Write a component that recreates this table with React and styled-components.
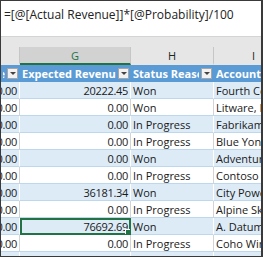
import React from "react";
import styled, { createGlobalStyle } from "styled-components";

const GlobalStyle = createGlobalStyle`
  html, body {
    margin: 0;
    padding: 0;
    background: #fff;
  }
  body {
    font-family: "Open Sans", "Noto Sans", sans-serif;
  }
`;

const COLS = "19px 111px 83px 80px";

const Frame = styled.div`
  width: 263px;
  height: 257px;
  box-sizing: border-box;
  border: 1px solid #3a3a3a;
  border-right-width: 2px;
  overflow: hidden;
  background: #fff;
  display: flex;
  flex-direction: column;
`;

const FormulaBar = styled.div`
  height: 36px;
  flex-shrink: 0;
  border-bottom: 1px solid #d4d4d4;
  padding: 5px 0 0 3px;
  box-sizing: border-box;
  font-size: 12px;
  color: #222;
  white-space: nowrap;
`;

const ColumnHeads = styled.div`
  flex-shrink: 0;
  background: #e6e6e6;
  padding-top: 10px;
  display: grid;
  grid-template-columns: ${COLS};
`;

const ColHead = styled.div`
  height: 15px;
  box-sizing: content-box;
  border-right: 1px solid #c6c6c6;
  border-bottom: 2px solid ${(p) => (p.$active ? "#217346" : "#e6e6e6")};
  background: ${(p) => (p.$active ? "#d2d2d2" : "#e6e6e6")};
  color: ${(p) => (p.$active ? "#217346" : "#222")};
  font-size: 11px;
  display: flex;
  align-items: center;
  justify-content: center;
  padding-top: 1px;
`;

const Row = styled.div`
  display: grid;
  grid-template-columns: ${COLS};
  height: 17px;
  flex-shrink: 0;
  background: ${(p) => (p.$head ? "#5b9bd5" : p.$band ? "#ddebf7" : "#fff")};
  font-size: 11px;
`;

const Cell = styled.div`
  position: relative;
  box-sizing: border-box;
  overflow: hidden;
  white-space: nowrap;
  display: flex;
  align-items: center;
  justify-content: ${(p) => (p.$num ? "flex-end" : "flex-start")};
  padding: ${(p) => (p.$num ? "0 2px 0 0" : "0 0 0 2px")};
  border-right: 1px solid ${(p) => (p.$band ? "#ffffff" : "#d4d4d4")};
  border-bottom: 1px solid #bdd7ee;
  color: #1a1a1a;
  letter-spacing: ${(p) => (p.$num ? "-0.3px" : "0")};
  outline: ${(p) => (p.$selected ? "2px solid #217346" : "none")};
  outline-offset: -2px;
`;

const HeadCell = styled.div`
  box-sizing: border-box;
  overflow: hidden;
  white-space: nowrap;
  display: flex;
  align-items: center;
  gap: 2px;
  padding: 0 2px;
  color: #fff;
  font-weight: bold;
`;

const HeadText = styled.span`
  flex: 1;
  overflow: hidden;
  display: flex;
  justify-content: ${(p) => (p.$end ? "flex-end" : "flex-start")};
`;

const Dropdown = styled.span`
  width: 11px;
  height: 11px;
  flex-shrink: 0;
  box-sizing: border-box;
  background: #f2f2f2;
  border: 1px solid #a6a6a6;
  display: flex;
  align-items: center;
  justify-content: center;

  &::after {
    content: "";
    border-left: 3px solid transparent;
    border-right: 3px solid transparent;
    border-top: 3px solid #444;
  }
`;

const FillHandle = styled.span`
  position: absolute;
  right: -1px;
  bottom: -1px;
  width: 4px;
  height: 4px;
  background: #217346;
  border: 1px solid #fff;
`;

const rows = [
  ["20222.45", "Won", "Fourth Coffee"],
  ["0.00", "Won", "Litware, Inc."],
  ["0.00", "In Progress", "Fabrikam, Inc."],
  ["0.00", "In Progress", "Blue Yonder Airlines"],
  ["0.00", "Won", "Adventure Works"],
  ["0.00", "In Progress", "Contoso Pharmaceuticals"],
  ["36181.34", "Won", "City Power & Light"],
  ["0.00", "In Progress", "Alpine Ski House"],
  ["76692.69", "Won", "A. Datum Corporation"],
  ["0.00", "In Progress", "Coho Winery"],
  ["0.00", "Won", "Fourth Coffee"],
];

const App = () => {
  return (
    <>
      <GlobalStyle />
      <Frame>
        <FormulaBar>=[@[Actual Revenue]]*[@Probability]/100</FormulaBar>

        <ColumnHeads>
          <ColHead />
          <ColHead $active>G</ColHead>
          <ColHead>H</ColHead>
          <ColHead>I</ColHead>
        </ColumnHeads>

        <Row $head>
          <HeadCell>
            <HeadText $end>Actual Revenue</HeadText>
            <Dropdown />
          </HeadCell>
          <HeadCell>
            <HeadText>Expected Revenue</HeadText>
            <Dropdown />
          </HeadCell>
          <HeadCell>
            <HeadText>Status Reason</HeadText>
            <Dropdown />
          </HeadCell>
          <HeadCell>
            <HeadText>Account</HeadText>
          </HeadCell>
        </Row>

        {rows.map(([expected, status, account], i) => {
          const band = i % 2 === 0;
          const selected = i === 8;
          return (
            <Row key={i} $band={band}>
              <Cell $num $band={band}>
                0.00
              </Cell>
              <Cell $num $band={band} $selected={selected}>
                {expected}
                {selected && <FillHandle />}
              </Cell>
              <Cell $band={band}>{status}</Cell>
              <Cell $band={band}>{account}</Cell>
            </Row>
          );
        })}
      </Frame>
    </>
  );
};

export default App;
